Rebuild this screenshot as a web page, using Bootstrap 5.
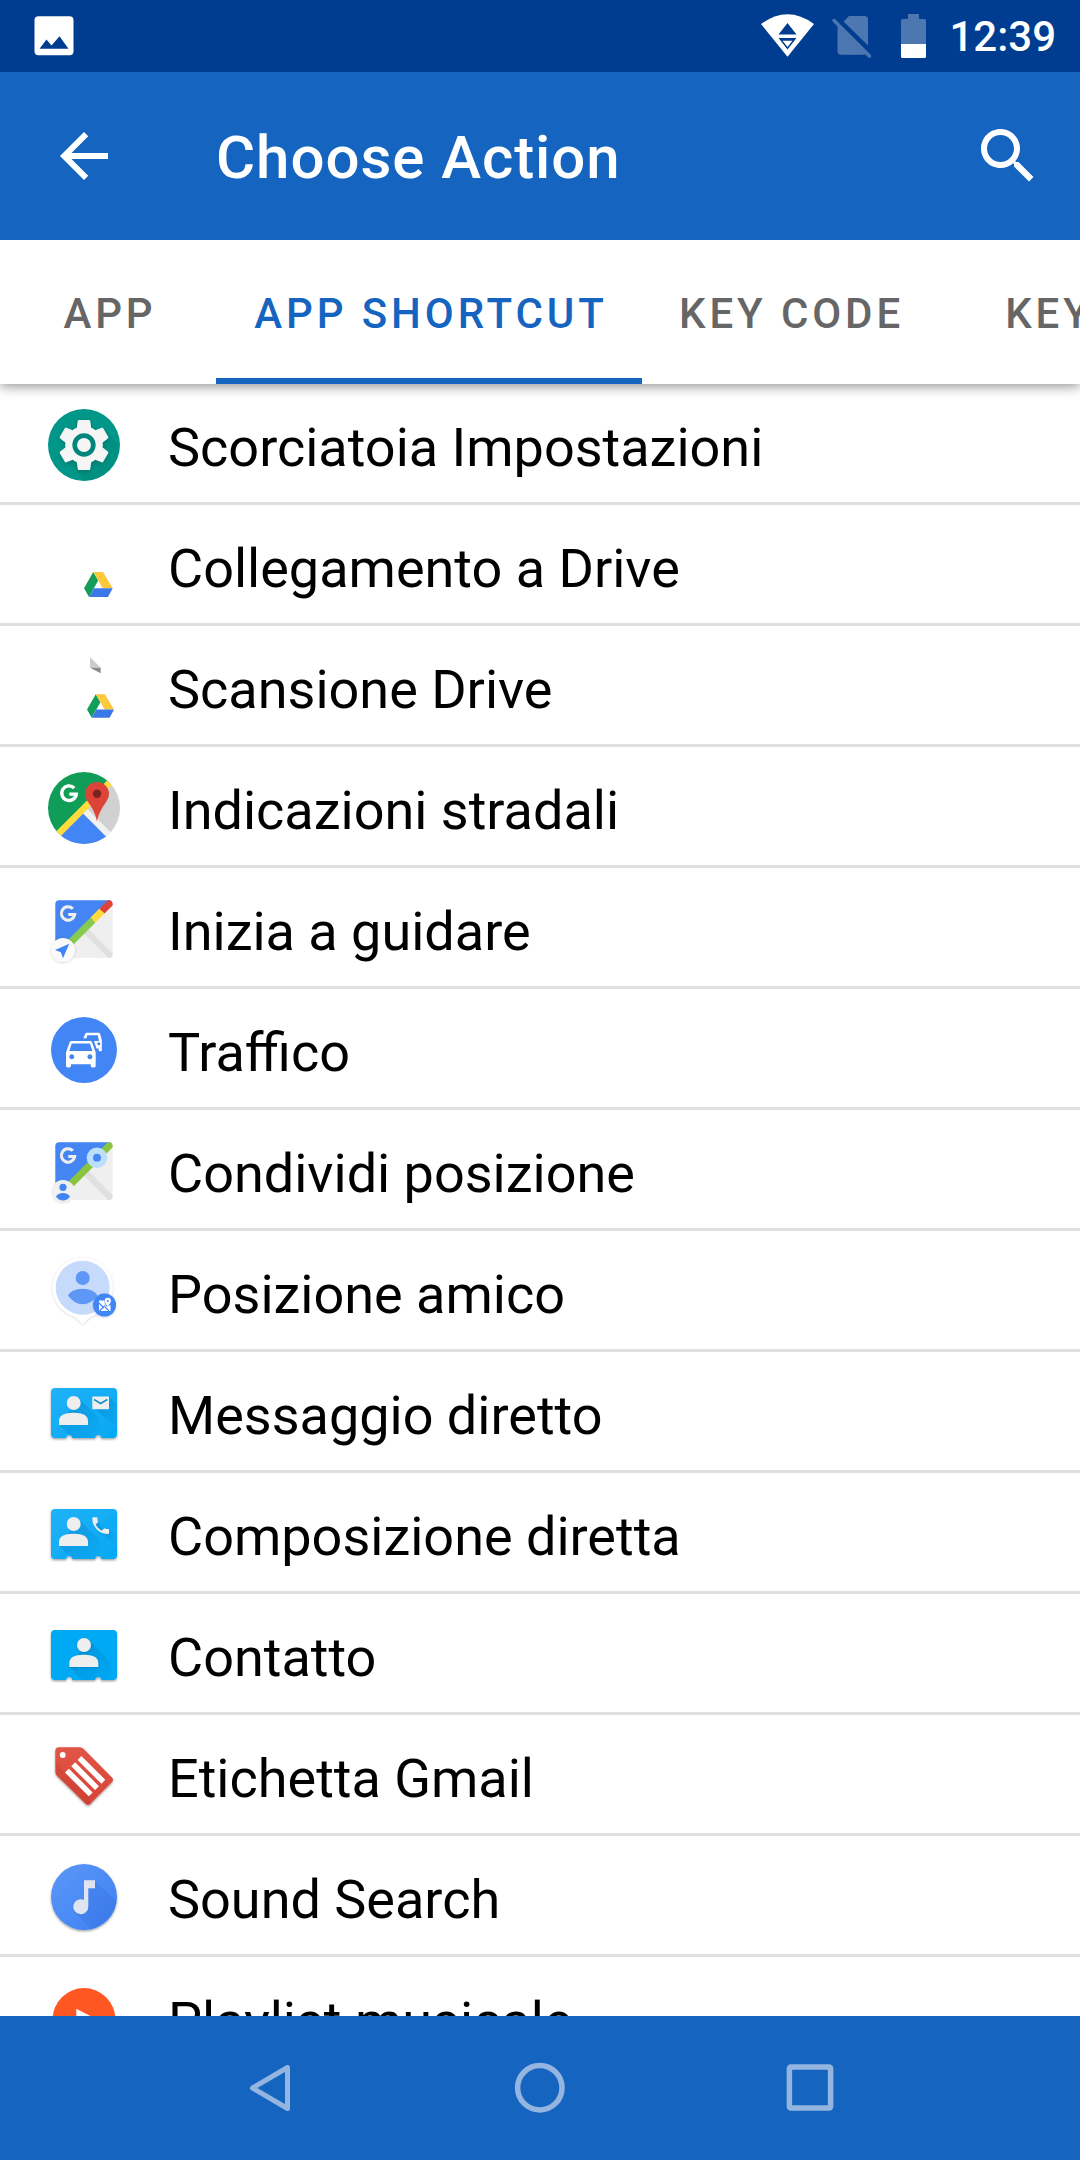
<!DOCTYPE html>
<html lang="it">
<head>
    <meta charset="UTF-8">
    <meta name="viewport" content="width=device-width, initial-scale=1.0">
    <title>Choose Action</title>
    <link href="https://cdn.jsdelivr.net/npm/bootstrap@5.3.0/dist/css/bootstrap.min.css" rel="stylesheet">
    <style>
        body { font-family: Roboto, "Noto Sans", sans-serif; background: #fff; color: #000; }
        .screen { width: 1080px; height: 2160px; }
        .status-bar { height: 72px; background: #003c8f; padding: 0 24px 0 34px; }
        .clock { font-size: 42px; font-weight: 500; line-height: 72px; margin-left: 21px; padding-top: 1px; }
        .app-bar { height: 168px; background: #1565c0; padding: 0 36px 0 48px; z-index: 3; }
        .app-title { font-size: 60px; font-weight: 500; line-height: 72px; letter-spacing: .95px; padding: 4px 0 0 96px; }
        .tab-strip { height: 144px; background: #fff; box-shadow: 0 2px 12px rgba(0, 0, 0, .45); z-index: 2; }
        .tab-strip .nav-link { width: 216px; height: 144px; padding: 3px 0 0; color: #666; font-size: 42px; font-weight: 500; line-height: 142px; letter-spacing: 3.9px; text-align: center; white-space: nowrap; }
        .tab-strip .tab-lead { padding-left: 4px; }
        .tab-strip .nav-link.active { width: 426px; padding-left: 4px; color: #1565c0; box-shadow: inset 0 -6px #1565c0; }
        .tab-strip .tab-mid { width: 299px; }
        .list-group-item.action { height: 121px; padding: 4px 0 0 48px; border: 0; border-bottom: 3px solid #e0e0e0; color: #000; font-size: 54px; line-height: 72px; }
        .action svg { overflow: visible; }
        .action span { margin-left: 48px; padding-top: 5px; white-space: nowrap; margin-bottom: 0; }
        .nav-bar { height: 144px; background: #1565c0; z-index: 2; padding: 0 135px; }
    </style>
</head>
<body>
    <div class="screen d-flex flex-column overflow-hidden">

        <!-- Status bar -->
        <div class="status-bar d-flex align-items-center flex-shrink-0 text-white">
            <svg class="me-auto" width="40" height="72" viewBox="0 0 40 72">
                <rect x=".5" y="16.300" width="39" height="39" rx="4" fill="#fff"/>
                <path d="M5.500 48.700L12.500 39.500L17.500 45.500L25.500 36.200L34.500 48.700z" fill="#003c8f"/>
            </svg>
            <svg width="170" height="72" viewBox="758 0 170 72">
                <path d="M761 24Q787.500 4.500 814 24L787.500 56.700z" fill="#fff"/>
                <path d="M787.500 23L796.500 34.600H778.500zM778.500 38H796.500L787.500 49.500z" fill="#003c8f"/>
                <path d="M782.500 40.800H792.500L787.500 47z" fill="#fff"/>
                <g fill="#4d77b1">
                    <path d="M843.500 21.500L849 16H864.500Q868 16 868 19.500V45.500zM837.500 26L866 54.800H841Q837.500 54.800 837.500 51z"/>
                    <path d="M834 20.500L869.500 56" stroke="#4d77b1" stroke-width="3.500" stroke-linecap="round"/>
                    <path d="M901 44V20.500Q901 19 902.500 19H908V14H919V19H924.500Q926 19 926 20.500V44z"/>
                </g>
                <path d="M901 44H926V56.500Q926 58 924.500 58H902.500Q901 58 901 56.500z" fill="#fff"/>
            </svg>
            <div class="clock">12:39</div>
        </div>

        <!-- App bar -->
        <div class="app-bar d-flex align-items-center flex-shrink-0 text-white position-relative">
            <svg width="72" height="72" viewBox="0 0 24 24" fill="#fff"><path d="M20 11H7.830l5.590-5.590L12 4l-8 8 8 8 1.410-1.410L7.830 13H20z"/></svg>
            <div class="app-title me-auto">Choose Action</div>
            <svg width="72" height="72" viewBox="0 0 24 24" fill="#fff"><path d="M15.500 14h-.79l-.28-.27C15.410 12.590 16 11.110 16 9.500 16 5.910 13.090 3 9.500 3S3 5.910 3 9.500 5.910 16 9.500 16c1.610 0 3.090-.59 4.230-1.570l.27.28v.79l5 4.990L20.490 19l-4.990-5zm-6 0C7.010 14 5 11.990 5 9.500S7.010 5 9.500 5 14 7.010 14 9.500 11.990 14 9.500 14z"/></svg>
        </div>

        <!-- Tabs -->
        <nav class="tab-strip nav flex-nowrap flex-shrink-0 position-relative">
            <a class="nav-link tab-lead flex-shrink-0">APP</a>
            <a class="nav-link active flex-shrink-0">APP SHORTCUT</a>
            <a class="nav-link tab-mid flex-shrink-0">KEY CODE</a>
            <a class="nav-link flex-shrink-0">KEY</a>
        </nav>

        <!-- Shared icon parts -->
        <svg width="0" height="0" class="position-absolute">
            <defs>
                <linearGradient id="cardFill" x2="1" y2="1"><stop offset="0" stop-color="#22b1f7"/><stop offset="1" stop-color="#03a9f4"/></linearGradient>
                <linearGradient id="redFill" x2="0" y2="1"><stop offset="0" stop-color="#e15546"/><stop offset="1" stop-color="#d64538"/></linearGradient>
                <linearGradient id="soundFill" x2="1" y2="1"><stop offset="0" stop-color="#5c97f8"/><stop offset="1" stop-color="#3c80f2"/></linearGradient>
                <linearGradient id="longShade" x2="1" y2="1"><stop offset="0" stop-color="#01579b" stop-opacity=".32"/><stop offset="1" stop-color="#01579b" stop-opacity="0"/></linearGradient>
                <filter id="drop" x="-20%" y="-20%" width="140%" height="150%"><feDropShadow dx="0" dy="1.300" stdDeviation=".9" flood-color="#000" flood-opacity=".38"/></filter>
                <filter id="dropSoft" x="-20%" y="-20%" width="140%" height="150%"><feDropShadow dx="0" dy=".6" stdDeviation=".9" flood-color="#000" flood-opacity=".2"/></filter>
                <clipPath id="disc"><circle cx="36" cy="36" r="36"/></clipPath>
                <clipPath id="tile"><rect x="7.300" y="7.300" width="57.400" height="57.600" rx="4"/></clipPath>
                <path id="letterG" d="M5.300-4.900A7.300 7.300 0 1 0 7.300 1.200H.3" fill="none" stroke-width="3.300"/>
                <g id="drive">
                    <path d="M45.300 42L50.200 50.500 41 67 36 58.200z" fill="#139c5a"/>
                    <path d="M45.300 42H55L64.700 58.200H54.700z" fill="#fbc93b"/>
                    <path d="M46 58.200H64.700L60 67H41z" fill="#3b78e7"/>
                </g>
                <path id="card" d="M7 11H65Q69 11 69 15V57Q69 61 65 61H53.300A3 3 0 1 0 47.300 61H24.300A3 3 0 1 0 18.300 61H7Q3 61 3 57V15Q3 11 7 11z"/>
                <g id="bust" fill="#eee">
                    <circle cx="25.700" cy="26" r="7"/>
                    <path d="M11 48V44Q11 35.700 25.500 35.700T40 44V48z"/>
                </g>
                <path id="bustShade" d="M30.500 21L52 42.500V61H24.400L11 48z"/>
            </defs>
        </svg>

        <!-- Shortcut list -->
        <div class="list-group list-group-flush flex-grow-1 overflow-hidden">
            <div class="list-group-item action d-flex align-items-center flex-shrink-0">
                <svg width="72" height="72" viewBox="0 0 72 72">
                    <circle cx="36" cy="36" r="36" fill="#009688"/>
                    <path d="M55 20L71 36A36 36 0 0 1 38 72L20 54z" fill="#00766d" opacity=".2"/>
                    <path transform="translate(6 6) scale(2.500)" filter="url(#dropSoft)" fill="#f5f5f5" d="M19.430 12.980c.04-.32.07-.64.07-.98s-.03-.66-.07-.98l2.110-1.650c.19-.15.24-.42.12-.64l-2-3.460c-.12-.22-.39-.3-.61-.22l-2.490 1c-.52-.4-1.080-.73-1.690-.98l-.38-2.650C14.460 2.180 14.250 2 14 2h-4c-.25 0-.46.18-.49.42l-.38 2.650c-.61.25-1.170.59-1.690.98l-2.490-1c-.23-.09-.49 0-.61.22l-2 3.460c-.13.22-.07.49.12.64l2.110 1.650c-.04.32-.07.65-.07.98s.03.66.07.98l-2.110 1.650c-.19.15-.24.42-.12.64l2 3.460c.12.22.39.3.61.22l2.490-1c.52.4 1.080.73 1.690.98l.38 2.650c.03.24.24.42.49.42h4c.25 0 .46-.18.49-.42l.38-2.650c.61-.25 1.170-.59 1.690-.98l2.490 1c.23.09.49 0 .61-.22l2-3.460c.12-.22.07-.49-.12-.64l-2.110-1.650z"/>
                    <circle cx="36" cy="36" r="9.300" fill="#f5f5f5" stroke="#00857c" stroke-width="4.700"/>
                </svg>
                <span>Scorciatoia Impostazioni</span>
            </div>
            <div class="list-group-item action d-flex align-items-center flex-shrink-0">
                <svg width="72" height="72" viewBox="0 0 72 72"><use href="#drive"/></svg>
                <span>Collegamento a Drive</span>
            </div>
            <div class="list-group-item action d-flex align-items-center flex-shrink-0">
                <svg width="72" height="72" viewBox="0 0 72 72">
                    <path d="M42 6L52.700 16.700H42z" fill="#ccc"/>
                    <path d="M42 16.700H52.700V22.300z" fill="#8a8a8a"/>
                    <use href="#drive" transform="translate(5.100 3.600) scale(.942)"/>
                </svg>
                <span>Scansione Drive</span>
            </div>
            <div class="list-group-item action d-flex align-items-center flex-shrink-0">
                <svg width="72" height="72" viewBox="0 0 72 72">
                    <g clip-path="url(#disc)">
                        <path d="M0 0H72L0 72z" fill="#109d58"/>
                        <path d="M72 0V72H0z" fill="#d1d1d1"/>
                        <path d="M36 40.500L72 76.500H0z" fill="#4285f4"/>
                        <path d="M36 38L66 68" stroke="#f1f1f1" stroke-width="6.300"/>
                        <path d="M-1 73.200L73-.8" stroke="#ffdc3c" stroke-width="6.500"/>
                    </g>
                    <use href="#letterG" x="21" y="21" stroke="#fff"/>
                    <path d="M48.900 49.500C48.300 45 46.500 40 42.500 33.500C39.500 29 37 26 37 22A12 12 0 0 1 61 22C61 26 58.500 29.500 55.500 33.800C51.500 40 49.800 45 48.900 49.500z" fill="#db4437"/>
                    <circle cx="49" cy="21.700" r="4.200" fill="#7b231e"/>
                </svg>
                <span>Indicazioni stradali</span>
            </div>
            <div class="list-group-item action d-flex align-items-center flex-shrink-0">
                <svg width="72" height="72" viewBox="0 0 72 72">
                    <g clip-path="url(#tile)">
                        <path d="M7 7H65V65H7z" fill="#efefef"/>
                        <path d="M7 7H65L7 65z" fill="#4485f3"/>
                        <path d="M36 36L66 66" stroke="#e0e0e0" stroke-width="6.500"/>
                        <path d="M20 52L45 27" stroke="#85cb4f" stroke-width="7"/>
                        <path d="M45 27L54 18" stroke="#ffdb3d" stroke-width="7"/>
                        <path d="M54 18L67 5" stroke="#db4437" stroke-width="7"/>
                    </g>
                    <use href="#letterG" x="20" y="20.300" stroke="#eee" transform="translate(20 20.300) scale(.92) translate(-20 -20.300)"/>
                    <circle cx="15" cy="57" r="12" fill="#fafafa" filter="url(#dropSoft)"/>
                    <path d="M21.300 50.700L15 65.200L12.800 59.300L7 57z" fill="#4285f4"/>
                </svg>
                <span>Inizia a guidare</span>
            </div>
            <div class="list-group-item action d-flex align-items-center flex-shrink-0">
                <svg width="72" height="72" viewBox="0 0 72 72">
                    <circle cx="36" cy="36" r="33" fill="#4285f4"/>
                    <path transform="translate(13.050 18.800) scale(1.650)" fill="#fff" d="M18.920 6.010C18.720 5.420 18.160 5 17.500 5h-11c-.66 0-1.210.42-1.420 1.010L3 12v8c0 .55.45 1 1 1h1c.55 0 1-.45 1-1v-1h12v1c0 .55.45 1 1 1h1c.55 0 1-.45 1-1v-8l-2.080-5.990zM6.500 16c-.83 0-1.500-.67-1.500-1.500S5.670 13 6.500 13s1.500.67 1.500 1.500S7.330 16 6.500 16zm11 0c-.83 0-1.500-.67-1.500-1.500s.67-1.500 1.500-1.500 1.500.67 1.500 1.500-.67 1.500-1.500 1.500zM5 11l1.500-4.500h11L19 11H5z"/>
                    <path d="M35.300 24.300L37.400 19.600Q37.700 18.700 38.700 18.700H50.500Q51.700 18.700 52 19.600L53.800 26V36.500Q53.800 37.300 53 37.300H51.500Q50.700 37.300 50.700 36.500V34.500H48.500L46 27H51L49.800 21.300H39.300L38.500 24.300z" fill="#fff"/>
                    <circle cx="50.800" cy="29.800" r="1.500" fill="#4285f4"/>
                </svg>
                <span>Traffico</span>
            </div>
            <div class="list-group-item action d-flex align-items-center flex-shrink-0">
                <svg width="72" height="72" viewBox="0 0 72 72">
                    <g clip-path="url(#tile)">
                        <path d="M7 7H65V65H7z" fill="#efefef"/>
                        <path d="M7 7H65L7 65z" fill="#4485f3"/>
                        <path d="M36 36L66 66" stroke="#e0e0e0" stroke-width="6.500"/>
                        <path d="M20 52L67 5" stroke="#8bc540" stroke-width="7"/>
                    </g>
                    <use href="#letterG" x="20" y="20.300" stroke="#eee" transform="translate(20 20.300) scale(.92) translate(-20 -20.300)"/>
                    <circle cx="49" cy="22.700" r="10.300" fill="#bbdefb"/>
                    <circle cx="49" cy="22.700" r="3.900" fill="#4285f4"/>
                    <circle cx="15" cy="57" r="12" fill="#f0f0f0"/>
                    <circle cx="15" cy="52.300" r="3.600" fill="#4285f4"/>
                    <path d="M8 61.500Q10 58 15 58T22 61.500Q19.500 65.500 15 65.500T8 61.500z" fill="#4285f4"/>
                </svg>
                <span>Condividi posizione</span>
            </div>
            <div class="list-group-item action d-flex align-items-center flex-shrink-0">
                <svg width="72" height="72" viewBox="0 0 72 72">
                    <path d="M34.700 68.300L27 60.700A30 30 0 1 1 42.400 60.700z" fill="#fff" filter="url(#dropSoft)"/>
                    <circle cx="34.700" cy="31.700" r="27" fill="#c6dafc"/>
                    <circle cx="34.700" cy="22" r="7" fill="#5e97f6"/>
                    <path d="M20 39.500Q24 32.800 34.700 32.800T49.400 39.500Q43 48.300 34.700 48.300T20 39.500z" fill="#5e97f6"/>
                    <circle cx="56.500" cy="49" r="11.500" fill="#4285f4" filter="url(#dropSoft)"/>
                    <path d="M51 44.500H56.500Q56 47.500 59 51L62.500 49V55H51z" fill="#fff"/>
                    <path d="M51 55.500L57 49.500M51 47L56 52M57 51L61 55" stroke="#4285f4" stroke-width="1.100" fill="none"/>
                    <path d="M59.800 51C58.500 48.300 56.700 47 56.700 44.900A3.100 3.100 0 0 1 62.900 44.900C62.900 47 61 48.300 59.800 51z" fill="#fff"/>
                    <circle cx="59.800" cy="45" r="1" fill="#4285f4"/>
                </svg>
                <span>Posizione amico</span>
            </div>
            <div class="list-group-item action d-flex align-items-center flex-shrink-0">
                <svg width="72" height="72" viewBox="0 0 72 72">
                    <use href="#card" fill="url(#cardFill)" filter="url(#drop)"/>
                    <use href="#bustShade" fill="url(#longShade)"/>
                    <path d="M61 20L69 28V51L47 32z" fill="url(#longShade)"/>
                    <use href="#bust"/>
                    <rect x="44.300" y="19.500" width="16.700" height="12.700" rx=".8" fill="#eee"/>
                    <path d="M46 22.500L52.600 26.500L59.300 22.500" fill="none" stroke="#1e8fc9" stroke-width="1.700"/>
                </svg>
                <span>Messaggio diretto</span>
            </div>
            <div class="list-group-item action d-flex align-items-center flex-shrink-0">
                <svg width="72" height="72" viewBox="0 0 72 72">
                    <use href="#card" fill="url(#cardFill)" filter="url(#drop)"/>
                    <use href="#bustShade" fill="url(#longShade)"/>
                    <path d="M49 22L54 30L61 31L69 39V49L46 27z" fill="url(#longShade)"/>
                    <use href="#bust"/>
                    <path transform="translate(41.500 16.500) scale(.93)" fill="#eee" d="M6.620 10.790c1.440 2.830 3.760 5.140 6.590 6.590l2.200-2.200c.27-.27.67-.36 1.020-.24 1.120.37 2.330.57 3.570.57.55 0 1 .45 1 1V20c0 .55-.45 1-1 1-9.390 0-17-7.610-17-17 0-.55.45-1 1-1h3.500c.55 0 1 .45 1 1 0 1.250.2 2.450.57 3.570.11.35.03.74-.25 1.020l-2.200 2.200z"/>
                </svg>
                <span>Composizione diretta</span>
            </div>
            <div class="list-group-item action d-flex align-items-center flex-shrink-0">
                <svg width="72" height="72" viewBox="0 0 72 72">
                    <use href="#card" fill="#03a9f4" filter="url(#drop)"/>
                    <use href="#bustShade" x="10.300" fill="url(#longShade)"/>
                    <use href="#bust" x="10.300" filter="url(#dropSoft)"/>
                </svg>
                <span>Contatto</span>
            </div>
            <div class="list-group-item action d-flex align-items-center flex-shrink-0">
                <svg width="72" height="72" viewBox="0 0 72 72">
                    <path d="M11 7.300H32Q34 7.300 35.500 8.800L64 37.500Q66 39.800 64 42L42.300 63.800Q40 66 37.700 63.800L8.800 35.500Q7.300 34 7.300 32V11Q7.300 7.300 11 7.300z" fill="url(#redFill)" filter="url(#drop)"/>
                    <path d="M17 33L41 57L44 65.300L37 63.800L8.500 35.500L7.300 20z" fill="#a52714" opacity=".13"/>
                    <circle cx="14.700" cy="15" r="2.900" fill="#fff"/>
                    <path d="M31.500 18L55.300 41.800M25.200 24.300L49 48.100M18.900 30.600L42.700 54.400" stroke="#fff" stroke-width="5.500"/>
                </svg>
                <span>Etichetta Gmail</span>
            </div>
            <div class="list-group-item action d-flex align-items-center flex-shrink-0">
                <svg width="72" height="72" viewBox="0 0 72 72">
                    <circle cx="36" cy="36" r="33" fill="url(#soundFill)" filter="url(#drop)"/>
                    <path d="M47 20L68.500 40A33 33 0 0 1 43 68.200L27 51L40 46V27z" fill="#3367d6" opacity=".25"/>
                    <path d="M36 19.300H47V27.300H40.300V45.500A7.500 7.500 0 1 1 36 38.900z" fill="#dfe5f0"/>
                </svg>
                <span>Sound Search</span>
            </div>
            <div class="list-group-item action d-flex align-items-center flex-shrink-0">
                <svg width="72" height="72" viewBox="0 0 72 72">
                    <circle cx="36" cy="35.300" r="31.300" fill="#ff5722"/>
                    <path d="M28.300 24.700L50 36L28.300 47.500z" fill="#fff"/>
                </svg>
                <span>Playlist musicale</span>
            </div>
        </div>

        <!-- Navigation bar -->
        <div class="nav-bar d-flex justify-content-between align-items-center flex-shrink-0 position-relative">
            <svg width="270" height="144" viewBox="135 2016 270 144" fill="none" stroke="#95b5e1" stroke-width="5" stroke-linejoin="round"><path d="M287.500 2067.500V2108.500L252.500 2088z"/></svg>
            <svg width="270" height="144" viewBox="405 2016 270 144" fill="none" stroke="#95b5e1" stroke-width="5.500"><circle cx="539.800" cy="2087.700" r="22.200"/></svg>
            <svg width="270" height="144" viewBox="675 2016 270 144" fill="none" stroke="#95b5e1" stroke-width="5.500" stroke-linejoin="round"><rect x="789.400" y="2066.900" width="41.200" height="41.200" rx="1.500"/></svg>
        </div>
    </div>

    <script src="https://cdn.jsdelivr.net/npm/bootstrap@5.3.0/dist/js/bootstrap.bundle.min.js"></script>
</body>
</html>
